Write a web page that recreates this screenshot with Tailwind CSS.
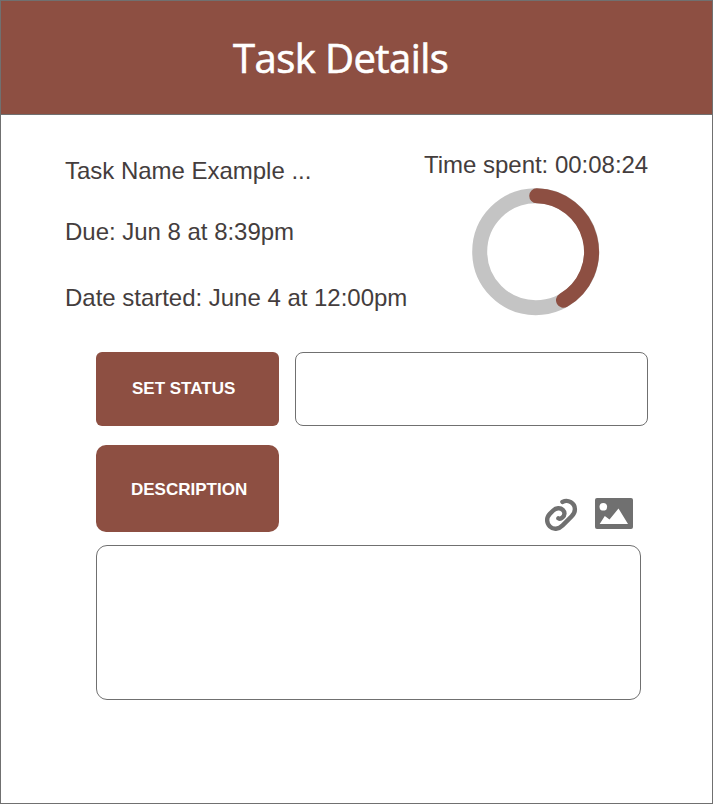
<!DOCTYPE html>
<html lang="en">
<head>
<meta charset="utf-8">
<title>Task Details</title>
<script src="https://cdn.jsdelivr.net/npm/@tailwindcss/browser@4"></script>
</head>
<body class="bg-white font-['Liberation_Sans',Arial,sans-serif]">
<main class="flex h-[804px] w-[713px] flex-col overflow-hidden border border-[#707070] bg-white">
  <header class="h-[114px] shrink-0 border-b border-[#707070] bg-[#8d4f42] pt-[32px] pl-[232px]">
    <h1 class="whitespace-nowrap font-['Trebuchet_MS','Open_Sans',sans-serif] text-[40px] leading-[50px] font-medium tracking-[-0.55px] text-white [-webkit-text-stroke:0.6px_white]">Task Details</h1>
  </header>
  <section class="flex h-[237px] shrink-0 pl-[64px] text-2xl leading-7 tracking-[-0.02px] text-[#443d3d]">
    <div class="w-[359px] whitespace-nowrap pt-[42px]">
      <p>Task Name Example ...</p>
      <p class="mt-[33px]">Due: Jun 8 at 8:39pm</p>
      <p class="mt-[38px]">Date started: June 4 at 12:00pm</p>
    </div>
    <div class="whitespace-nowrap pt-[36px]">
      <p>Time spent: 00:08:24</p>
      <svg class="mt-[8px] ml-[47px]" width="130" height="130" viewBox="471 187 130 130" fill="none" stroke-width="15">
        <circle cx="535.7" cy="251.7" r="56" stroke="#c4c4c4"/>
        <path d="M536.7 195.8A56 56 0 0 1 563.5 300.3" stroke="#8d4f42" stroke-linecap="round"/>
      </svg>
    </div>
  </section>
  <section class="flex flex-col pl-[95px]">
    <div class="flex gap-4">
      <button class="h-[74px] w-[183px] rounded-md bg-[#8d4f42] pl-[36px] text-left text-[17px] font-bold whitespace-nowrap text-white">SET STATUS</button>
      <div class="h-[74px] w-[353px] rounded-lg border border-[#707070]"></div>
    </div>
    <div class="mt-[19px] flex h-[87px] items-end">
      <button class="h-[87px] w-[183px] rounded-[10px] bg-[#8d4f42] pt-[2px] pl-[35px] text-left text-[17px] font-bold whitespace-nowrap text-white">DESCRIPTION</button>
      <svg class="-mb-[4px] ml-[261px]" width="42" height="42" viewBox="0 0 42 42" fill="none" stroke="#707070" stroke-width="4.4" stroke-linecap="round">
        <path d="M22.4 7.9C28.2 5.1 34.9 8.9 34.9 15.2C34.9 18.2 33.6 20.4 31.6 22.4L22.6 31.4C18.6 35.4 13.4 36 9.9 32.5C6.3 28.9 6.2 23.6 9.8 19.9L13.2 16.5C16.1 13.7 20.3 13.4 22.8 15.8C25.2 18.2 24.9 21.2 22.5 23.4C21.2 24.6 19.7 25.2 18.4 24.3"/>
      </svg>
      <svg class="-mb-[4px] ml-[8px]" width="48" height="42" viewBox="0 0 48 42">
        <rect x="5" y="4" width="38" height="31" rx="2" fill="#707070"/>
        <circle cx="13.3" cy="12.8" r="3.8" fill="white"/>
        <path d="M9.7 30L14.8 22L19.5 25.5L28.5 14.5L38 30Z" fill="white"/>
      </svg>
    </div>
    <div class="mt-[13px] h-[155px] w-[545px] rounded-[11px] border border-[#707070]"></div>
  </section>
</main>
</body>
</html>
